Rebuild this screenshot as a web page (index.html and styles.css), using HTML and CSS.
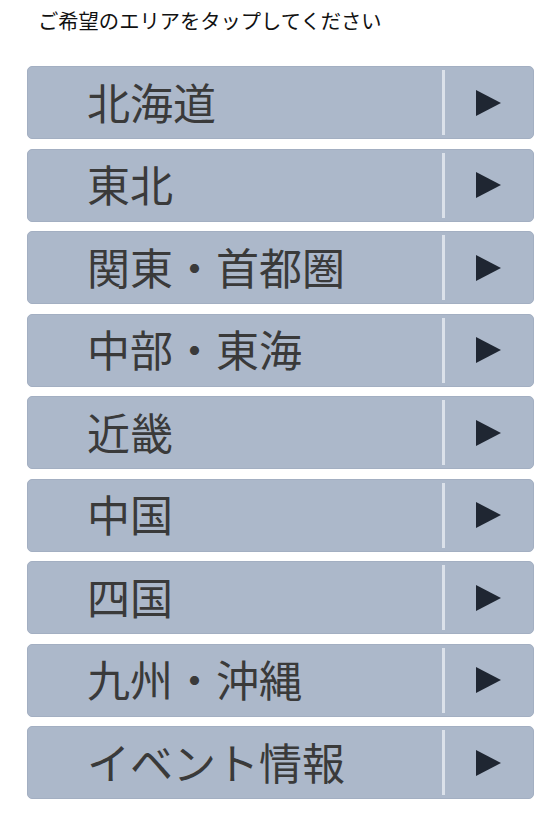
FILE: index.html
```html
<!DOCTYPE html>
<html lang="ja">
<head>
    <meta charset="UTF-8">
    <meta name="viewport" content="width=device-width, initial-scale=1.0">
    <title>エリア選択</title>
    <link rel="stylesheet" href="styles.css">
</head>
<body>
    <div class="container">
        <p class="lead">ご希望のエリアをタップしてください</p>

        <ul class="area-list">
            <li><a class="area-btn" href="#"><span class="area-name">北海道</span><span class="area-arrow"></span></a></li>
            <li><a class="area-btn" href="#"><span class="area-name">東北</span><span class="area-arrow"></span></a></li>
            <li><a class="area-btn" href="#"><span class="area-name">関東・首都圏</span><span class="area-arrow"></span></a></li>
            <li><a class="area-btn" href="#"><span class="area-name">中部・東海</span><span class="area-arrow"></span></a></li>
            <li><a class="area-btn" href="#"><span class="area-name">近畿</span><span class="area-arrow"></span></a></li>
            <li><a class="area-btn" href="#"><span class="area-name">中国</span><span class="area-arrow"></span></a></li>
            <li><a class="area-btn" href="#"><span class="area-name">四国</span><span class="area-arrow"></span></a></li>
            <li><a class="area-btn" href="#"><span class="area-name">九州・沖縄</span><span class="area-arrow"></span></a></li>
            <li><a class="area-btn" href="#"><span class="area-name">イベント情報</span><span class="area-arrow"></span></a></li>
        </ul>
    </div>
</body>
</html>
```

FILE: styles.css
```css
* {
    margin: 0;
    padding: 0;
    box-sizing: border-box;
    font-family: "Noto Sans CJK JP", "Noto Sans", sans-serif;
}

body {
    background-color: #fff;
}

.container {
    width: 100%;
    padding: 8px 26px 0 27px;
}

.lead {
    font-size: 20.3px;
    line-height: 24px;
    color: #111;
    padding-left: 11px;
    margin-bottom: 34px;
}

.area-list {
    list-style: none;
    display: flex;
    flex-direction: column;
    gap: 9.5px;
}

.area-btn {
    display: flex;
    align-items: stretch;
    height: 73px;
    background-color: #acb8ca;
    border: 1px solid #a3afc2;
    border-radius: 5px;
    text-decoration: none;
}

.area-name {
    flex: 1;
    display: flex;
    align-items: center;
    padding-left: 59px;
    padding-bottom: 4px;
    font-size: 43px;
    color: #3a3a3a;
}

.area-arrow {
    width: 91px;
    display: flex;
    align-items: center;
    justify-content: center;
    position: relative;
}

.area-arrow::before {
    content: "";
    position: absolute;
    left: 0;
    top: 3px;
    bottom: 3px;
    width: 3px;
    background-color: #dbe1ea;
}

.area-arrow::after {
    content: "";
    width: 0;
    height: 0;
    border-top: 13px solid transparent;
    border-bottom: 13px solid transparent;
    border-left: 25px solid #1f2632;
    margin-left: 2px;
}
```
